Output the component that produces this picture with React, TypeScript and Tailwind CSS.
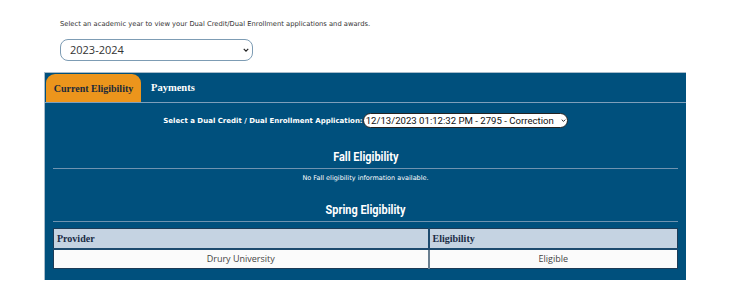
import React from "react";

const slab = { fontFamily: '"Liberation Serif", "DejaVu Serif", serif' };
const cond = { fontFamily: 'Roboto, "Liberation Sans", sans-serif' };
const verdana = { fontFamily: '"DejaVu Sans", Verdana, sans-serif' };

const Chevron: React.FC<{ className?: string }> = ({ className }) => (
  <svg viewBox="0 0 8 5" className={className} fill="none" stroke="currentColor" strokeWidth="1.6">
    <path d="M1 1l3 3 3-3" />
  </svg>
);

const Heading: React.FC<{ title: string }> = ({ title }) => (
  <div className="mx-2 border-b border-[#6f93b0] pb-[3px] text-center text-[13px] leading-[16px]" style={cond}>
    <h2 className="inline-block origin-center scale-x-[0.84] font-bold text-white">{title}</h2>
  </div>
);

const App: React.FC = () => {
  return (
    <div className="h-[297px] w-[740px] bg-white" style={verdana}>
      <p className="pl-[60px] pt-[19px] text-[6.75px] leading-[10px] text-[#333]">
        Select an academic year to view your Dual Credit/Dual Enrollment applications and awards.
      </p>
      <div className="pl-[60px] pt-[10px]">
        <div className="relative w-[193px]">
          <select
            defaultValue="2023-2024"
            className="block h-[22px] w-full appearance-none rounded-[8px] border border-[#7d9cb4] bg-white pl-[9px] text-[11px] text-[#333] outline-none"
            style={{ fontFamily: '"Open Sans", sans-serif' }}
          >
            <option>2023-2024</option>
          </select>
          <Chevron className="pointer-events-none absolute right-[4px] top-[9px] h-[4px] w-[6px] text-[#222]" />
        </div>
      </div>

      <div className="ml-[44px] mt-[11px] w-[642px] border-l border-t border-[#a9bccb] bg-[#00507d] pb-[11px]">
        <div className="flex h-[30px] items-end gap-[10px] border-b border-[#7e9fbb] pl-[1px]">
          <div
            className="flex h-[28px] w-[95px] items-center justify-center whitespace-nowrap rounded-t-[9px] bg-[#ec951c] text-[10px] font-bold text-[#1b2a3a]"
            style={slab}
          >
            Current Eligibility
          </div>
          <div className="flex h-[28px] items-center text-[10.5px] font-bold text-white" style={slab}>
            Payments
          </div>
        </div>

        <div className="mt-[10px] flex h-[15px] items-center justify-center">
          <span className="text-[7px] font-bold leading-[10px] text-white">
            Select a Dual Credit / Dual Enrollment Application:
          </span>
          <div className="relative h-[15px]">
            <select
              defaultValue="a"
              className="block h-[15px] w-[205px] appearance-none rounded-full border border-[#222] bg-white pl-[2px] text-[9.6px] leading-[12px] text-[#111] outline-none"
              style={{ fontFamily: 'Roboto, "Open Sans", sans-serif' }}
            >
              <option value="a">12/13/2023 01:12:32 PM - 2795 - Correction</option>
            </select>
            <Chevron className="pointer-events-none absolute right-[2px] top-[6px] h-[3px] w-[5px] text-[#222]" />
          </div>
        </div>

        <div className="pt-[21px]">
          <Heading title="Fall Eligibility" />
          <p className="pt-[5px] text-center text-[6.5px] leading-[9px] text-white">
            No Fall eligibility information available.
          </p>
        </div>

        <div className="pt-[19px]">
          <Heading title="Spring Eligibility" />
        </div>

        <div className="mx-[8px] mt-[6px]">
          <table className="w-full border-collapse border border-[#1d3b57]">
            <thead>
              <tr className="h-[20px] bg-[#c5d3e2] text-left text-[10px] text-[#1a2b45]" style={slab}>
                <th className="w-[375px] border-b-2 border-r-2 border-[#1d4a6e] pl-[3px] font-bold">Provider</th>
                <th className="border-b-2 border-[#1d4a6e] pl-[3px] font-bold">Eligibility</th>
              </tr>
            </thead>
            <tbody>
              <tr
                className="h-[20px] bg-[#fbfbfb] text-center text-[9px] text-[#444]"
                style={{ fontFamily: '"Open Sans", sans-serif' }}
              >
                <td className="border-r-2 border-[#6a7f90]">Drury University</td>
                <td>Eligible</td>
              </tr>
            </tbody>
          </table>
        </div>
      </div>
    </div>
  );
};

export default App;
